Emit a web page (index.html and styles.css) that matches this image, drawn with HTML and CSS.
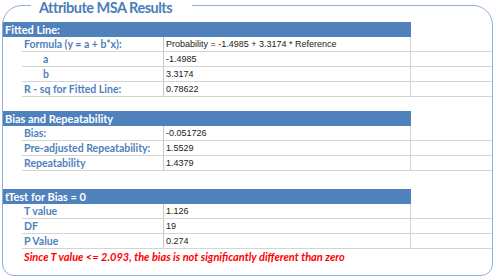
FILE: index.html
```html
<!DOCTYPE html>
<html>
<head>
<meta charset="utf-8">
<link rel="stylesheet" href="styles.css">
</head>
<body>
<div class="panel">
  <h1 class="panel-title">Attribute MSA Results</h1>

  <section class="group group-fit">
    <div class="group-head">Fitted Line:</div>
    <div class="row"><div class="label">Formula (y = a + b*x):</div><div class="value">Probability = -1.4985 + 3.3174 * Reference</div></div>
    <div class="row"><div class="label indent">a</div><div class="value">-1.4985</div></div>
    <div class="row"><div class="label indent">b</div><div class="value">3.3174</div></div>
    <div class="row"><div class="label">R - sq for Fitted Line:</div><div class="value">0.78622</div></div>
  </section>

  <section class="group group-bias">
    <div class="group-head">Bias and Repeatability</div>
    <div class="row"><div class="label">Bias:</div><div class="value">-0.051726</div></div>
    <div class="row"><div class="label">Pre-adjusted Repeatability:</div><div class="value">1.5529</div></div>
    <div class="row"><div class="label">Repeatability</div><div class="value">1.4379</div></div>
  </section>

  <section class="group group-ttest">
    <div class="group-head">tTest for Bias = 0</div>
    <div class="row"><div class="label">T value</div><div class="value">1.126</div></div>
    <div class="row"><div class="label">DF</div><div class="value">19</div></div>
    <div class="row"><div class="label">P Value</div><div class="value">0.274</div></div>
    <p class="note">Since T value &lt;= 2.093, the bias is not significantly different than zero</p>
  </section>
</div>
</body>
</html>
```

FILE: styles.css
```css
html, body {
  margin: 0;
  padding: 0;
  background: #ffffff;
}

body {
  font-family: "Lato", "Open Sans", sans-serif;
}

.panel {
  position: relative;
  box-sizing: border-box;
  margin: 5px 2px 0 2px;
  width: 491px;
  height: 271px;
  padding: 16px 0 0 0;
  border: 1px solid #8fb0dc;
  border-radius: 20px 20px 12px 12px;
}

.panel-title {
  position: absolute;
  top: -5px;
  left: 28px;
  margin: 0;
  padding: 0 20px 0 8px;
  background: #ffffff;
  font-family: "Lato", sans-serif;
  font-weight: bold;
  font-size: 14.5px;
  letter-spacing: -0.5px;
  line-height: 14px;
  color: #4a7ebb;
}

.group {
  margin: 0;
}

.group-bias {
  margin-top: 14px;
}

.group-ttest {
  margin-top: 18px;
}

.group-head {
  width: 408px;
  height: 15px;
  box-sizing: border-box;
  padding: 0 0 0 2px;
  background: #4f81bd;
  color: #ffffff;
  font-weight: bold;
  font-size: 11px;
  line-height: 15px;
}

.row {
  display: grid;
  grid-template-columns: 141px 248px;
  margin-left: 19px;
  height: 15px;
  box-sizing: border-box;
  border-bottom: 1px solid #d4d4d4;
}

.label {
  padding-left: 2px;
  color: #4f81bd;
  font-weight: bold;
  font-size: 10.5px;
  line-height: 14px;
  white-space: nowrap;
}

.label.indent {
  padding-left: 21px;
}

.value {
  box-sizing: border-box;
  border-left: 1px solid #c8c8c8;
  border-right: 1px solid #d4d4d4;
  padding-left: 2px;
  font-family: "Liberation Sans", sans-serif;
  font-size: 9px;
  line-height: 14px;
  color: #222222;
  white-space: nowrap;
}

.note {
  margin: 1px 0 0 21px;
  color: #ff0000;
  font-weight: bold;
  font-style: italic;
  font-size: 11px;
  line-height: 14px;
  white-space: nowrap;
}
```
